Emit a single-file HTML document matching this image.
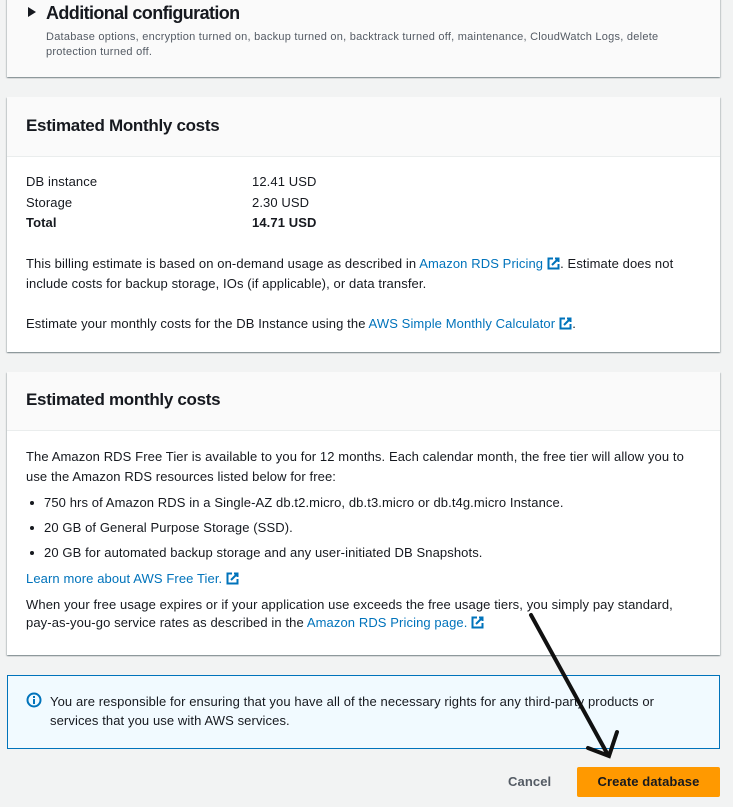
<!DOCTYPE html>
<html><head><style>
body{margin:0;width:733px;height:807px;background:#f2f3f3;position:relative;overflow:hidden;font-family:"Liberation Sans",sans-serif;color:#16191f;}
.card{position:absolute;left:7px;width:713px;background:#fff;box-shadow:0 1px 1px rgba(0,28,36,.3),1px 1px 1px rgba(0,28,36,.15),-1px 1px 1px rgba(0,28,36,.15);}
.hd{position:absolute;left:0;top:0;width:713px;background:#fafafa;border-bottom:1px solid #eaeded;}
.t{position:absolute;white-space:nowrap;font-size:13px;line-height:16px;letter-spacing:0.1px;margin-top:1px;}
.h{position:absolute;white-space:nowrap;font-size:17px;font-weight:bold;letter-spacing:-0.3px;line-height:20px;margin-top:1px;}
a{color:#0073bb;text-decoration:none;}
.ext{display:inline-block;width:13px;height:13px;vertical-align:-2px;margin-left:4px;}
.dot{display:inline-block;width:4px;height:4px;border-radius:2px;background:#16191f;margin-right:10px;vertical-align:2px;}
</style></head><body>

<div class="card" style="top:-5px;height:82px;background:#fafafa"></div>
<svg style="position:absolute;left:27px;top:6px" width="10" height="12"><path d="M1 1 L9 6 L1 11Z" fill="#16191f"/></svg>
<div class="h" style="left:46px;top:2px;font-size:18px;letter-spacing:-0.6px">Additional configuration</div>
<div class="t" style="left:46px;top:28px;font-size:11px;color:#545b64;letter-spacing:0.25px">Database options, encryption turned on, backup turned on, backtrack turned off, maintenance, CloudWatch Logs, delete</div>
<div class="t" style="left:46px;top:43px;font-size:11px;color:#545b64;letter-spacing:0.25px">protection turned off.</div>

<div class="card" style="top:97px;height:255px"><div class="hd" style="height:59px"></div></div>
<div class="h" style="left:26px;top:115px">Estimated Monthly costs</div>
<div class="t" style="left:26px;top:173px">DB instance</div><div class="t" style="left:252px;top:173px">12.41 USD</div>
<div class="t" style="left:26px;top:194px">Storage</div><div class="t" style="left:252px;top:194px">2.30 USD</div>
<div class="t" style="left:26px;top:214px;font-weight:bold">Total</div><div class="t" style="left:252px;top:214px;font-weight:bold">14.71 USD</div>
<div class="t" style="left:26px;top:255px">This billing estimate is based on on-demand usage as described in <a>Amazon RDS Pricing</a><svg class="ext" viewBox="0 0 13 13"><path d="M6 1.5H1.5V11.5H11.5V7" fill="none" stroke="#0073bb" stroke-width="2"/><path d="M8 1.5H11.5V5M11.5 1.5L5 8" fill="none" stroke="#0073bb" stroke-width="2"/></svg>. Estimate does not</div>
<div class="t" style="left:26px;top:275px">include costs for backup storage, IOs (if applicable), or data transfer.</div>
<div class="t" style="left:26px;top:315px">Estimate your monthly costs for the DB Instance using the <a>AWS Simple Monthly Calculator</a><svg class="ext" viewBox="0 0 13 13"><path d="M6 1.5H1.5V11.5H11.5V7" fill="none" stroke="#0073bb" stroke-width="2"/><path d="M8 1.5H11.5V5M11.5 1.5L5 8" fill="none" stroke="#0073bb" stroke-width="2"/></svg>.</div>

<div class="card" style="top:372px;height:283px"><div class="hd" style="height:58px"></div></div>
<div class="h" style="left:26px;top:389px">Estimated monthly costs</div>
<div class="t" style="left:26px;top:448px">The Amazon RDS Free Tier is available to you for 12 months. Each calendar month, the free tier will allow you to</div>
<div class="t" style="left:26px;top:468px">use the Amazon RDS resources listed below for free:</div>
<div class="t" style="left:30px;top:494px"><span class="dot"></span>750 hrs of Amazon RDS in a Single-AZ db.t2.micro, db.t3.micro or db.t4g.micro Instance.</div>
<div class="t" style="left:30px;top:519px"><span class="dot"></span>20 GB of General Purpose Storage (SSD).</div>
<div class="t" style="left:30px;top:544px"><span class="dot"></span>20 GB for automated backup storage and any user-initiated DB Snapshots.</div>
<div class="t" style="left:26px;top:570px"><a>Learn more about AWS Free Tier.</a><svg class="ext" viewBox="0 0 13 13"><path d="M6 1.5H1.5V11.5H11.5V7" fill="none" stroke="#0073bb" stroke-width="2"/><path d="M8 1.5H11.5V5M11.5 1.5L5 8" fill="none" stroke="#0073bb" stroke-width="2"/></svg></div>
<div class="t" style="left:26px;top:596px">When your free usage expires or if your application use exceeds the free usage tiers, you simply pay standard,</div>
<div class="t" style="left:26px;top:614px">pay-as-you-go service rates as described in the <a>Amazon RDS Pricing page.</a><svg class="ext" viewBox="0 0 13 13"><path d="M6 1.5H1.5V11.5H11.5V7" fill="none" stroke="#0073bb" stroke-width="2"/><path d="M8 1.5H11.5V5M11.5 1.5L5 8" fill="none" stroke="#0073bb" stroke-width="2"/></svg></div>

<div style="position:absolute;left:7px;top:675px;width:711px;height:72px;border:1px solid #0073bb;background:#f1faff"></div>
<svg style="position:absolute;left:26px;top:692px" width="16" height="16"><circle cx="8" cy="8" r="6.5" fill="none" stroke="#0073bb" stroke-width="2"/><rect x="7" y="7" width="2" height="5" fill="#0073bb"/><rect x="7" y="4" width="2" height="2" fill="#0073bb"/></svg>
<div class="t" style="left:50px;top:693px">You are responsible for ensuring that you have all of the necessary rights for any third-party products or</div>
<div class="t" style="left:50px;top:712px">services that you use with AWS services.</div>

<div class="t" style="left:508px;top:773px;font-weight:bold;color:#545b64">Cancel</div>
<div style="position:absolute;left:577px;top:767px;width:143px;height:30px;background:#ff9900;border-radius:2px"></div>
<div class="t" style="left:577px;top:773px;width:143px;text-align:center;font-weight:bold">Create database</div>

<svg style="position:absolute;left:0;top:0" width="733" height="807"><g stroke="#111" stroke-width="4" stroke-linecap="round" fill="none"><path d="M531 615 L608 755"/><path d="M588 748 L609 756 L617 732"/></g></svg>
</body></html>
